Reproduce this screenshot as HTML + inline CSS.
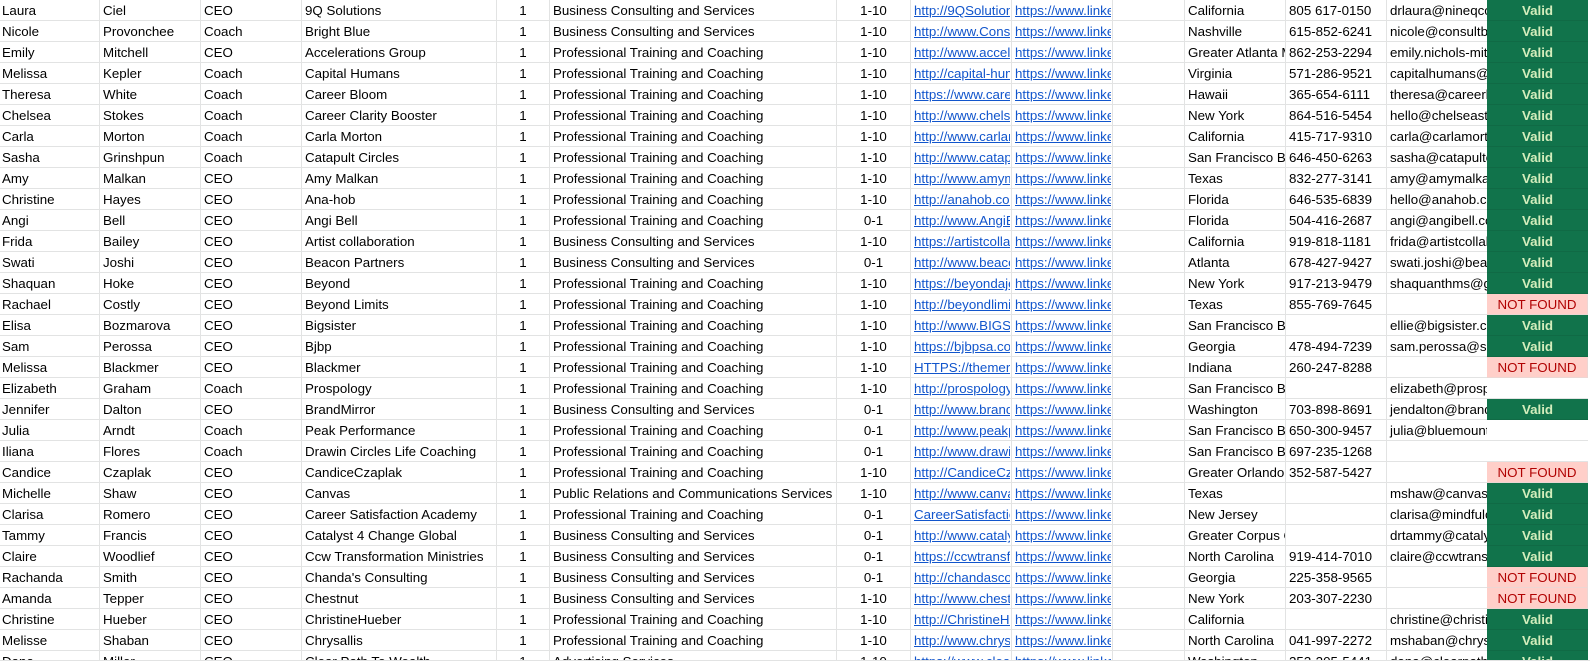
<!DOCTYPE html>
<html lang="en">
<head>
<meta charset="utf-8">
<title>Sheet</title>
<style>
html,body{margin:0;padding:0;background:#fff;width:1590px;height:662px;overflow:hidden}
#w{position:absolute;left:0;top:0;width:1590px;height:660px;overflow:hidden;background:#fff}
#b{position:absolute;left:0;top:660px;width:1590px;height:1px;background:#e2e3e3}
table{border-collapse:separate;border-spacing:0;table-layout:fixed;width:1588px;font:13.33px "Liberation Sans",Arial,sans-serif;color:#000}
td{box-sizing:border-box;height:21px;padding:2px 1px 0 3px;border-right:1px solid #e2e3e3;border-bottom:1px solid #e2e3e3;white-space:nowrap;overflow:hidden;line-height:18px;vertical-align:top}
td:first-child{padding-left:2px}
td:nth-child(5),td:nth-child(7){text-align:center;padding-left:2px;padding-right:2px}
td:nth-child(14){text-align:center}
td:nth-child(13){border-right:0}
td:nth-child(14){padding-left:0;padding-right:0;border-right:0}
a{display:block;overflow:hidden;color:#1155cc;text-decoration:underline}
td.v{background:#11734b;color:#d4edbc;font-weight:bold;border-bottom-color:#106a45}
td.n{background:#ffcfc9;color:#b10202;border-bottom-color:#ecd6d3;border-right:1px solid #ecd6d3}
</style>
</head>
<body>
<div id="w">
<table>
<colgroup><col style="width:100px"><col style="width:101px"><col style="width:101px"><col style="width:195px"><col style="width:53px"><col style="width:287px"><col style="width:74px"><col style="width:101px"><col style="width:101px"><col style="width:72px"><col style="width:101px"><col style="width:101px"><col style="width:100px"><col style="width:101px"></colgroup>
<tr><td>Laura</td><td>Ciel</td><td>CEO</td><td>9Q Solutions</td><td>1</td><td>Business Consulting and Services</td><td>1-10</td><td><a>http://9QSolutions.com</a></td><td><a>https://www.linkedin.com</a></td><td></td><td>California</td><td>805 617-0150</td><td>drlaura@nineqconsulting.com</td><td class="v">Valid</td></tr>
<tr><td>Nicole</td><td>Provonchee</td><td>Coach</td><td>Bright Blue</td><td>1</td><td>Business Consulting and Services</td><td>1-10</td><td><a>http://www.ConsultBrightBlue</a></td><td><a>https://www.linkedin.com</a></td><td></td><td>Nashville</td><td>615-852-6241</td><td>nicole@consultbrightblue.com</td><td class="v">Valid</td></tr>
<tr><td>Emily</td><td>Mitchell</td><td>CEO</td><td>Accelerations Group</td><td>1</td><td>Professional Training and Coaching</td><td>1-10</td><td><a>http://www.accelerations</a></td><td><a>https://www.linkedin.com</a></td><td></td><td>Greater Atlanta Metro</td><td>862-253-2294</td><td>emily.nichols-mitchell@mail.com</td><td class="v">Valid</td></tr>
<tr><td>Melissa</td><td>Kepler</td><td>Coach</td><td>Capital Humans</td><td>1</td><td>Professional Training and Coaching</td><td>1-10</td><td><a>http://capital-humans.com</a></td><td><a>https://www.linkedin.com</a></td><td></td><td>Virginia</td><td>571-286-9521</td><td>capitalhumans@gmail.com</td><td class="v">Valid</td></tr>
<tr><td>Theresa</td><td>White</td><td>Coach</td><td>Career Bloom</td><td>1</td><td>Professional Training and Coaching</td><td>1-10</td><td><a>https://www.careerbloom</a></td><td><a>https://www.linkedin.com</a></td><td></td><td>Hawaii</td><td>365-654-6111</td><td>theresa@careerbloom.com</td><td class="v">Valid</td></tr>
<tr><td>Chelsea</td><td>Stokes</td><td>Coach</td><td>Career Clarity Booster</td><td>1</td><td>Professional Training and Coaching</td><td>1-10</td><td><a>http://www.chelseastokes</a></td><td><a>https://www.linkedin.com</a></td><td></td><td>New York</td><td>864-516-5454</td><td>hello@chelseastokes.com</td><td class="v">Valid</td></tr>
<tr><td>Carla</td><td>Morton</td><td>Coach</td><td>Carla Morton</td><td>1</td><td>Professional Training and Coaching</td><td>1-10</td><td><a>http://www.carlamorton</a></td><td><a>https://www.linkedin.com</a></td><td></td><td>California</td><td>415-717-9310</td><td>carla@carlamorton.com</td><td class="v">Valid</td></tr>
<tr><td>Sasha</td><td>Grinshpun</td><td>Coach</td><td>Catapult Circles</td><td>1</td><td>Professional Training and Coaching</td><td>1-10</td><td><a>http://www.catapultcircles</a></td><td><a>https://www.linkedin.com</a></td><td></td><td>San Francisco Bay Area</td><td>646-450-6263</td><td>sasha@catapultcircles.com</td><td class="v">Valid</td></tr>
<tr><td>Amy</td><td>Malkan</td><td>CEO</td><td>Amy Malkan</td><td>1</td><td>Professional Training and Coaching</td><td>1-10</td><td><a>http://www.amymalkan</a></td><td><a>https://www.linkedin.com</a></td><td></td><td>Texas</td><td>832-277-3141</td><td>amy@amymalkan.com</td><td class="v">Valid</td></tr>
<tr><td>Christine</td><td>Hayes</td><td>CEO</td><td>Ana-hob</td><td>1</td><td>Professional Training and Coaching</td><td>1-10</td><td><a>http://anahob.com/about</a></td><td><a>https://www.linkedin.com</a></td><td></td><td>Florida</td><td>646-535-6839</td><td>hello@anahob.com</td><td class="v">Valid</td></tr>
<tr><td>Angi</td><td>Bell</td><td>CEO</td><td>Angi Bell</td><td>1</td><td>Professional Training and Coaching</td><td>0-1</td><td><a>http://www.AngiBell.com</a></td><td><a>https://www.linkedin.com</a></td><td></td><td>Florida</td><td>504-416-2687</td><td>angi@angibell.com</td><td class="v">Valid</td></tr>
<tr><td>Frida</td><td>Bailey</td><td>CEO</td><td>Artist collaboration</td><td>1</td><td>Business Consulting and Services</td><td>1-10</td><td><a>https://artistcollab.com</a></td><td><a>https://www.linkedin.com</a></td><td></td><td>California</td><td>919-818-1181</td><td>frida@artistcollab.com</td><td class="v">Valid</td></tr>
<tr><td>Swati</td><td>Joshi</td><td>CEO</td><td>Beacon Partners</td><td>1</td><td>Business Consulting and Services</td><td>0-1</td><td><a>http://www.beaconpartners</a></td><td><a>https://www.linkedin.com</a></td><td></td><td>Atlanta</td><td>678-427-9427</td><td>swati.joshi@beacon.com</td><td class="v">Valid</td></tr>
<tr><td>Shaquan</td><td>Hoke</td><td>CEO</td><td>Beyond</td><td>1</td><td>Professional Training and Coaching</td><td>1-10</td><td><a>https://beyondajob.com</a></td><td><a>https://www.linkedin.com</a></td><td></td><td>New York</td><td>917-213-9479</td><td>shaquanthms@gmail.com</td><td class="v">Valid</td></tr>
<tr><td>Rachael</td><td>Costly</td><td>CEO</td><td>Beyond Limits</td><td>1</td><td>Professional Training and Coaching</td><td>1-10</td><td><a>http://beyondlimits.com</a></td><td><a>https://www.linkedin.com</a></td><td></td><td>Texas</td><td>855-769-7645</td><td></td><td class="n">NOT FOUND</td></tr>
<tr><td>Elisa</td><td>Bozmarova</td><td>CEO</td><td>Bigsister</td><td>1</td><td>Professional Training and Coaching</td><td>1-10</td><td><a>http://www.BIGSister.com</a></td><td><a>https://www.linkedin.com</a></td><td></td><td>San Francisco Bay Area</td><td></td><td>ellie@bigsister.com</td><td class="v">Valid</td></tr>
<tr><td>Sam</td><td>Perossa</td><td>CEO</td><td>Bjbp</td><td>1</td><td>Professional Training and Coaching</td><td>1-10</td><td><a>https://bjbpsa.com/about</a></td><td><a>https://www.linkedin.com</a></td><td></td><td>Georgia</td><td>478-494-7239</td><td>sam.perossa@sbjbp.com</td><td class="v">Valid</td></tr>
<tr><td>Melissa</td><td>Blackmer</td><td>CEO</td><td>Blackmer</td><td>1</td><td>Professional Training and Coaching</td><td>1-10</td><td><a>HTTPS://themerblack.com</a></td><td><a>https://www.linkedin.com</a></td><td></td><td>Indiana</td><td>260-247-8288</td><td></td><td class="n">NOT FOUND</td></tr>
<tr><td>Elizabeth</td><td>Graham</td><td>Coach</td><td>Prospology</td><td>1</td><td>Professional Training and Coaching</td><td>1-10</td><td><a>http://prospology.com</a></td><td><a>https://www.linkedin.com</a></td><td></td><td>San Francisco Bay Area</td><td></td><td>elizabeth@prospology.com</td><td></td></tr>
<tr><td>Jennifer</td><td>Dalton</td><td>CEO</td><td>BrandMirror</td><td>1</td><td>Business Consulting and Services</td><td>0-1</td><td><a>http://www.brandmirror</a></td><td><a>https://www.linkedin.com</a></td><td></td><td>Washington</td><td>703-898-8691</td><td>jendalton@brandmirror.com</td><td class="v">Valid</td></tr>
<tr><td>Julia</td><td>Arndt</td><td>Coach</td><td>Peak Performance</td><td>1</td><td>Professional Training and Coaching</td><td>0-1</td><td><a>http://www.peakperformance</a></td><td><a>https://www.linkedin.com</a></td><td></td><td>San Francisco Bay Area</td><td>650-300-9457</td><td>julia@bluemountain.com</td><td></td></tr>
<tr><td>Iliana</td><td>Flores</td><td>Coach</td><td>Drawin Circles Life Coaching</td><td>1</td><td>Professional Training and Coaching</td><td>0-1</td><td><a>http://www.drawincircles</a></td><td><a>https://www.linkedin.com</a></td><td></td><td>San Francisco Bay Area</td><td>697-235-1268</td><td></td><td></td></tr>
<tr><td>Candice</td><td>Czaplak</td><td>CEO</td><td>CandiceCzaplak</td><td>1</td><td>Professional Training and Coaching</td><td>1-10</td><td><a>http://CandiceCzaplak.com</a></td><td><a>https://www.linkedin.com</a></td><td></td><td>Greater Orlando</td><td>352-587-5427</td><td></td><td class="n">NOT FOUND</td></tr>
<tr><td>Michelle</td><td>Shaw</td><td>CEO</td><td>Canvas</td><td>1</td><td>Public Relations and Communications Services</td><td>1-10</td><td><a>http://www.canvas.com</a></td><td><a>https://www.linkedin.com</a></td><td></td><td>Texas</td><td></td><td>mshaw@canvas.com</td><td class="v">Valid</td></tr>
<tr><td>Clarisa</td><td>Romero</td><td>CEO</td><td>Career Satisfaction Academy</td><td>1</td><td>Professional Training and Coaching</td><td>0-1</td><td><a>CareerSatisfaction.com</a></td><td><a>https://www.linkedin.com</a></td><td></td><td>New Jersey</td><td></td><td>clarisa@mindfulcareer.com</td><td class="v">Valid</td></tr>
<tr><td>Tammy</td><td>Francis</td><td>CEO</td><td>Catalyst 4 Change Global</td><td>1</td><td>Business Consulting and Services</td><td>0-1</td><td><a>http://www.catalyst4change</a></td><td><a>https://www.linkedin.com</a></td><td></td><td>Greater Corpus Christi</td><td></td><td>drtammy@catalyst4.com</td><td class="v">Valid</td></tr>
<tr><td>Claire</td><td>Woodlief</td><td>CEO</td><td>Ccw Transformation Ministries</td><td>1</td><td>Business Consulting and Services</td><td>0-1</td><td><a>https://ccwtransformation</a></td><td><a>https://www.linkedin.com</a></td><td></td><td>North Carolina</td><td>919-414-7010</td><td>claire@ccwtransformation</td><td class="v">Valid</td></tr>
<tr><td>Rachanda</td><td>Smith</td><td>CEO</td><td>Chanda's Consulting</td><td>1</td><td>Business Consulting and Services</td><td>0-1</td><td><a>http://chandasconsulting</a></td><td><a>https://www.linkedin.com</a></td><td></td><td>Georgia</td><td>225-358-9565</td><td></td><td class="n">NOT FOUND</td></tr>
<tr><td>Amanda</td><td>Tepper</td><td>CEO</td><td>Chestnut</td><td>1</td><td>Business Consulting and Services</td><td>1-10</td><td><a>http://www.chestnut.com</a></td><td><a>https://www.linkedin.com</a></td><td></td><td>New York</td><td>203-307-2230</td><td></td><td class="n">NOT FOUND</td></tr>
<tr><td>Christine</td><td>Hueber</td><td>CEO</td><td>ChristineHueber</td><td>1</td><td>Professional Training and Coaching</td><td>1-10</td><td><a>http://ChristineHueber.com</a></td><td><a>https://www.linkedin.com</a></td><td></td><td>California</td><td></td><td>christine@christinehueber</td><td class="v">Valid</td></tr>
<tr><td>Melisse</td><td>Shaban</td><td>CEO</td><td>Chrysallis</td><td>1</td><td>Professional Training and Coaching</td><td>1-10</td><td><a>http://www.chrysallis.com</a></td><td><a>https://www.linkedin.com</a></td><td></td><td>North Carolina</td><td>041-997-2272</td><td>mshaban@chrysallis.com</td><td class="v">Valid</td></tr>
<tr><td>Dana</td><td>Miller</td><td>CEO</td><td>Clear Path To Wealth</td><td>1</td><td>Advertising Services</td><td>1-10</td><td><a>https://www.clearpath.com</a></td><td><a>https://www.linkedin.com</a></td><td></td><td>Washington</td><td>253-205-5441</td><td>dana@clearpath.com</td><td class="v">Valid</td></tr>
</table>
</div>
<div id="b"></div>
</body>
</html>
